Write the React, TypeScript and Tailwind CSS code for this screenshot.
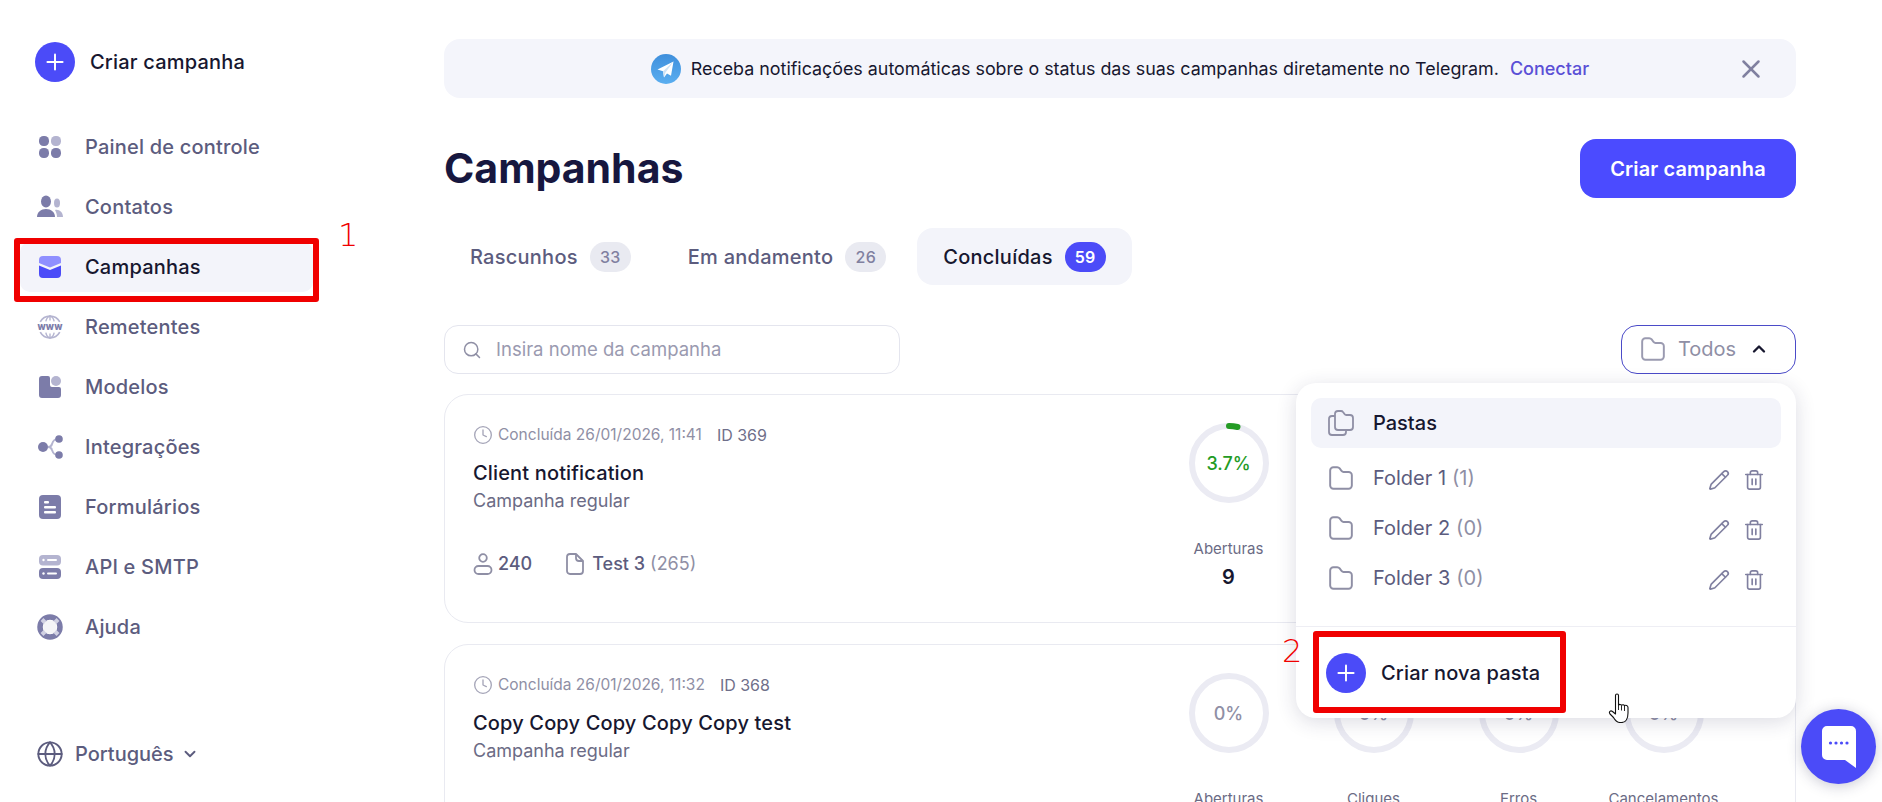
import { ChevronDown, ChevronUp, Clock, Globe, Pencil, Plus, Search, Trash2, X } from "lucide-react";
import { ReactNode } from "react";

const DARK = "#7c7ca9";
const LIGHT = "#b4b4d0";

function DashboardIcon() {
  return (
    <svg width="24" height="24" viewBox="0 0 24 24">
      <rect x="1" y="1" width="10" height="10" rx="4.5" fill={DARK} />
      <rect x="13" y="1" width="10" height="10" rx="4.5" fill={LIGHT} />
      <rect x="1" y="13" width="10" height="10" rx="4.5" fill={DARK} />
      <rect x="13" y="13" width="10" height="10" rx="4.5" fill={DARK} />
    </svg>
  );
}

function ContactsIcon() {
  return (
    <svg width="26" height="24" viewBox="0 0 26 24">
      <ellipse cx="9" cy="6.5" rx="5" ry="6" fill={DARK} />
      <path d="M0 22c0-5 4-8 9-8s9 3 9 8z" fill={DARK} />
      <ellipse cx="20" cy="8" rx="3" ry="4.5" fill={LIGHT} />
      <path d="M18 15c4-1 8 2 8 7h-6c0-3-1-5-2-7z" fill={LIGHT} />
    </svg>
  );
}

function MailIcon() {
  return (
    <svg width="24" height="24" viewBox="0 0 24 24">
      <path d="M1 5a4 4 0 0 1 4-4h14a4 4 0 0 1 4 4v3l-11 4.5L1 8z" fill="#8f8fff" />
      <path d="M1 10.5l11 4.5 11-4.5V19a4 4 0 0 1-4 4H5a4 4 0 0 1-4-4z" fill="#4b4bf8" />
    </svg>
  );
}

function WwwIcon() {
  return (
    <svg width="28" height="28" viewBox="0 0 28 28" fill="none">
      <path d="M3.500 8.500a12 12 0 0 1 21 0M3.500 19.500a12 12 0 0 0 21 0" stroke={LIGHT} strokeWidth="1.800" />
      <path d="M14 2v5M14 21v5M9.500 8c.6-3 2-5 4.500-6 2.500 1 3.900 3 4.500 6M9.500 20c.6 3 2 5 4.500 6 2.500-1 3.900-3 4.500-6" stroke={LIGHT} strokeWidth="1.500" />
      <text x="14" y="17.500" textAnchor="middle" textLength="27" lengthAdjust="spacingAndGlyphs" fontSize="10" fontWeight="800" fill={DARK}>
        www
      </text>
    </svg>
  );
}

function TemplateIcon() {
  return (
    <svg width="24" height="24" viewBox="0 0 24 24">
      <path d="M1 4a3 3 0 0 1 3-3h6a2 2 0 0 1 2 2v7a2 2 0 0 0 2 2h7a2 2 0 0 1 2 2v6a3 3 0 0 1-3 3H4a3 3 0 0 1-3-3z" fill={DARK} />
      <circle cx="18" cy="6" r="5" fill={LIGHT} />
    </svg>
  );
}

function IntegrationIcon() {
  return (
    <svg width="26" height="24" viewBox="0 0 26 24" fill="none">
      <path d="M21 4c-4 0-5 2-6 5-.5 2-1.500 3-4 3 2.500 0 3.500 1 4 3 1 3 2 5 6 5" stroke={LIGHT} strokeWidth="2" />
      <circle cx="6" cy="12" r="5" fill={DARK} />
      <circle cx="22" cy="4" r="3.800" fill={DARK} />
      <circle cx="22" cy="20" r="3.800" fill={DARK} />
    </svg>
  );
}

function FormIcon() {
  return (
    <svg width="24" height="24" viewBox="0 0 24 24">
      <rect x="1" y="0" width="22" height="24" rx="4" fill={DARK} />
      <rect x="6" y="6" width="5" height="2.400" rx="1" fill="#fff" />
      <rect x="6" y="11" width="12" height="2.400" rx="1" fill="#fff" />
      <rect x="6" y="16" width="12" height="2.400" rx="1" fill="#fff" />
    </svg>
  );
}

function ApiIcon() {
  return (
    <svg width="24" height="24" viewBox="0 0 24 24">
      <rect x="1" y="0" width="22" height="10.500" rx="4" fill={LIGHT} />
      <rect x="1" y="13" width="22" height="11" rx="4" fill={DARK} />
      <circle cx="5.500" cy="5" r="1.200" fill="#fff" />
      <rect x="9" y="4" width="10" height="2" rx="1" fill="#fff" />
      <circle cx="5.500" cy="18.500" r="1.200" fill="#fff" />
      <rect x="9" y="17.500" width="10" height="2" rx="1" fill="#fff" />
    </svg>
  );
}

function HelpIcon() {
  return (
    <svg width="26" height="26" viewBox="0 0 26 26" fill="none">
      <circle cx="13" cy="13" r="10" stroke={DARK} strokeWidth="5.500" />
      <path d="M5 5.500l4 4M21 5.500l-4 4M5 20.500l4-4M21 20.500l-4-4" stroke="#d0d0e2" strokeWidth="4" />
      <circle cx="13" cy="13" r="6.800" fill="#f4f4f7" />
    </svg>
  );
}

function FolderIcon({ className }: { className: string }) {
  return (
    <svg className={className} viewBox="0 0 24 24" fill="none" stroke="currentColor" strokeWidth="1.800" strokeLinejoin="round">
      <path d="M2 5a3 3 0 0 1 3-3h3.500c1 0 1.700.4 2.300 1.100L12.500 5.500c.5.600 1 .9 1.800.9H19a3 3 0 0 1 3 3V19a3 3 0 0 1-3 3H5a3 3 0 0 1-3-3z" />
    </svg>
  );
}

function FoldersIcon() {
  return (
    <svg className="h-[26px] w-[26px] text-[#8f8fa5]" viewBox="0 0 26 26" fill="none" stroke="currentColor" strokeWidth="1.800" strokeLinejoin="round">
      <path d="M7 4a3 3 0 0 1 3-3h3c1 0 1.500.3 2 1l1.500 2c.4.600 1 1 1.800 1H22a3 3 0 0 1 3 3v9a3 3 0 0 1-3 3H10a3 3 0 0 1-3-3z" />
      <path d="M7 6H4a3 3 0 0 0-3 3v13a3 3 0 0 0 3 3h11a3 3 0 0 0 3-3v-1" />
    </svg>
  );
}

function UserIcon() {
  return (
    <svg className="h-[22px] w-[20px] text-[#8f8fa5]" viewBox="0 0 20 22" fill="none" stroke="currentColor" strokeWidth="1.800">
      <circle cx="10" cy="5" r="3.800" />
      <rect x="1.500" y="13" width="17" height="8" rx="4" />
    </svg>
  );
}

function DocIcon() {
  return (
    <svg className="h-[22px] w-[20px] text-[#8f8fa5]" viewBox="0 0 20 22" fill="none" stroke="currentColor" strokeWidth="1.800" strokeLinejoin="round">
      <path d="M2 4a3 3 0 0 1 3-3h6l7 7v10a3 3 0 0 1-3 3H5a3 3 0 0 1-3-3z" />
      <path d="M11 1v4a3 3 0 0 0 3 3h4" />
    </svg>
  );
}

function TelegramIcon() {
  return (
    <svg width="30" height="30" viewBox="0 0 30 30">
      <defs>
        <linearGradient id="tg" x1="0" y1="0" x2="0" y2="1">
          <stop offset="0" stopColor="#3f8fdc" />
          <stop offset="1" stopColor="#5aaef0" />
        </linearGradient>
      </defs>
      <circle cx="15" cy="15" r="15" fill="url(#tg)" />
      <path d="M22.500 7.500 6.500 15.500l5.500 1.800 1 6.200 3-4 4 2.200z" fill="#fff" />
      <path d="M22.500 7.500 12 17.300l1 6.200 1.500-5z" fill="#cfe3f5" />
    </svg>
  );
}

function HandCursor() {
  return (
    <svg className="absolute top-[693px] left-[1608px] h-[30px] w-[25px]" viewBox="0 0 25 30" fill="#fff" stroke="#111" strokeWidth="1.100" strokeLinejoin="round">
      <path d="M7.500 2.500c0-2 3-2 3 0v9.500c.8-.8 2.400-.8 3 .2.900-.7 2.400-.6 3 .4 1-.6 3.500-.4 3.500 1.900v5.500c0 5-2 9.500-6.500 9.500h-1.500c-3.500 0-4.800-2-6.500-5L2 21c-1.500-2 .5-4 2.500-2.500l3 2.500z" />
      <path d="M13.500 12.500v5M16.500 13v5M10.500 12v5" fill="none" strokeWidth="0.900" />
    </svg>
  );
}

function Ring({ label, value, percent, count }: { label: string; value: string; percent: number; count: string }) {
  return (
    <div className="flex w-[145px] flex-col items-center">
      <div className="relative h-[80px] w-[80px]">
        <svg className="h-[80px] w-[80px] -rotate-90" viewBox="0 0 80 80" fill="none">
          <circle cx="40" cy="40" r="37" stroke="#ebebf3" strokeWidth="6" />
          {percent > 0 && (
            <circle cx="40" cy="40" r="37" stroke="#249b24" strokeWidth="6" strokeLinecap="round" strokeDasharray={`${(percent / 100) * 232} 232`} />
          )}
        </svg>
        <span className={`absolute inset-0 flex items-center justify-center pt-[2px] text-lg font-medium ${percent > 0 ? "text-[#249b24]" : "text-[#8f8fa5]"}`}>
          {value}
        </span>
      </div>
      <span className="mt-[36px] text-[15px] leading-5 text-[#6b6b85]">{label}</span>
      <span className="mt-[6px] text-xl font-semibold leading-6 text-[#17172f]">{count}</span>
    </div>
  );
}

function CampaignCard({ time, id, title, recipients, template, rate, opens }: { time: string; id: string; title: string; recipients: string; template: string; rate: string; opens: string }) {
  const percent = parseFloat(rate);
  return (
    <div className="flex h-[229px] shrink-0 justify-between rounded-[24px] border border-[#e9eaf1] pr-[59px] pl-[28px]">
      <div className="pt-[30px]">
        <div className="flex h-5 items-center text-[15.500px] text-[#8f8fa5]">
          <Clock className="mr-[5px] h-5 w-5 text-[#a5a5b8]" strokeWidth={1.6} />
          <span>Concluída {time}</span>
          <span className="ml-[15px] text-base text-[#6f6f8a]">ID {id}</span>
        </div>
        <div className="mt-[15px] text-xl leading-[26px] font-medium tracking-[0.15px] text-[#17172f]">{title}</div>
        <div className="mt-[4px] text-lg leading-[22px] text-[#6b6b85]">Campanha regular</div>
        <div className="mt-[40px] flex h-6 items-center text-lg text-[#5c5c7e]">
          <UserIcon />
          <span className="ml-[5px] font-medium">{recipients}</span>
          <span className="mr-[7px] ml-[33px]">
            <DocIcon />
          </span>
          <span className="font-medium">{template}</span>
          <span className="ml-[5px] text-[#8f8fa5]">(265)</span>
        </div>
      </div>
      <div className="flex pt-[28px]">
        <Ring label="Aberturas" value={rate} percent={percent} count={opens} />
        <Ring label="Cliques" value="0%" percent={0} count="0" />
        <Ring label="Erros" value="0%" percent={0} count="0" />
        <Ring label="Cancelamentos" value="0%" percent={0} count="0" />
      </div>
    </div>
  );
}

function FolderRow({ name, count }: { name: string; count: string }) {
  return (
    <div className="flex h-[50px] items-center pr-[16px] pl-[17px]">
      <FolderIcon className="h-[26px] w-[26px] text-[#8f8fa5]" />
      <span className="ml-[19px] text-xl text-[#5c5c7e]">{name}</span>
      <span className="ml-[6px] text-xl text-[#8f8fa5]">({count})</span>
      <div className="mt-[4px] ml-auto flex items-center gap-[13px] text-[#8080a0]">
        <Pencil className="h-[22px] w-[22px]" strokeWidth={1.8} />
        <Trash2 className="h-[22px] w-[22px]" strokeWidth={1.8} />
      </div>
    </div>
  );
}

function NavItem({ icon, label, active }: { icon: ReactNode; label: string; active?: boolean }) {
  return (
    <div className={`flex h-[50px] items-center rounded-[10px] pl-[17px] text-xl font-medium tracking-[0.2px] ${active ? "bg-[#f3f4fa] text-[#17172f]" : "text-[#5c5c7e]"}`}>
      <span className="flex w-[26px] justify-center">{icon}</span>
      <span className="ml-[22px]">{label}</span>
    </div>
  );
}

export default function App() {
  return (
    <div className="relative flex h-[802px] w-[1882px] overflow-hidden bg-white [font-family:Inter,sans-serif]">
      <aside className="flex h-full w-[444px] shrink-0 flex-col pt-[42px]">
        <div className="flex items-center pl-[35px]">
          <span className="flex h-[40px] w-[40px] items-center justify-center rounded-full bg-[#4b4bf8] text-white">
            <Plus className="h-[26px] w-[26px]" strokeWidth={1.8} />
          </span>
          <span className="ml-[15px] text-xl font-medium tracking-[0.2px] text-[#17172f]">Criar campanha</span>
        </div>
        <nav className="mt-[40px] flex w-[293px] translate-x-[20px] flex-col gap-[10px]">
          <NavItem icon={<DashboardIcon />} label="Painel de controle" />
          <NavItem icon={<ContactsIcon />} label="Contatos" />
          <NavItem icon={<MailIcon />} label="Campanhas" active />
          <NavItem icon={<WwwIcon />} label="Remetentes" />
          <NavItem icon={<TemplateIcon />} label="Modelos" />
          <NavItem icon={<IntegrationIcon />} label="Integrações" />
          <NavItem icon={<FormIcon />} label="Formulários" />
          <NavItem icon={<ApiIcon />} label="API e SMTP" />
          <NavItem icon={<HelpIcon />} label="Ajuda" />
        </nav>
        <div className="mt-auto flex items-center pb-[34px] pl-[36px] text-[#5c5c7e]">
          <Globe className="h-[28px] w-[28px]" strokeWidth={1.600} />
          <span className="ml-[11px] text-xl font-medium">Português</span>
          <ChevronDown className="ml-[7px] h-[18px] w-[18px]" strokeWidth={2.500} />
        </div>
      </aside>

      <main className="flex h-full w-[1352px] shrink-0 flex-col pt-[39px]">
        <div className="relative flex h-[59px] shrink-0 items-center justify-center rounded-[16px] bg-[#f4f5fb] text-lg">
          <TelegramIcon />
          <span className="ml-[10px] text-[17.870px] text-[#17172f]">Receba notificações automáticas sobre o status das suas campanhas diretamente no Telegram.</span>
          <span className="ml-[11px] font-medium text-[#5a4fd6]">Conectar</span>
          <X className="absolute top-[15px] right-[30px] h-[30px] w-[30px] text-[#8080a0]" strokeWidth={2} />
        </div>

        <div className="mt-[41px] flex h-[59px] shrink-0 items-center justify-between">
          <h1 className="text-[41px] font-bold text-[#17173f]">Campanhas</h1>
          <button className="h-[59px] w-[216px] rounded-[16px] bg-[#4b4bff] text-xl font-semibold tracking-[0.1px] text-white">Criar campanha</button>
        </div>

        <div className="mt-[30px] flex h-[57px] shrink-0 items-center gap-[5px] text-xl font-medium tracking-[0.25px]">
          <div className="flex h-full items-center gap-[12px] rounded-[16px] px-[26px] text-[#5c5c7e]">
            Rascunhos
            <span className="flex h-[30px] w-[41px] items-center justify-center rounded-full bg-[#e9eaf1] text-base text-[#8080a0]">33</span>
          </div>
          <div className="flex h-full items-center gap-[12px] rounded-[16px] px-[26px] text-[#5c5c7e]">
            Em andamento
            <span className="flex h-[30px] w-[41px] items-center justify-center rounded-full bg-[#e9eaf1] text-base text-[#8080a0]">26</span>
          </div>
          <div className="flex h-full items-center gap-[12px] rounded-[16px] bg-[#f3f4fa] px-[26px] text-[#17172f]">
            Concluídas
            <span className="flex h-[30px] w-[41px] items-center justify-center rounded-full bg-[#4b4bf8] text-base font-semibold text-white">59</span>
          </div>
        </div>

        <div className="mt-[40px] flex h-[49px] shrink-0 items-center justify-between">
          <div className="flex h-[49px] w-[456px] items-center rounded-[14px] border border-[#e4e5ee] pl-[17px]">
            <Search className="h-[20px] w-[20px] text-[#8f8fa5]" strokeWidth={1.800} />
            <span className="ml-[14px] text-[18.500px] text-[#9a9ab0]">Insira nome da campanha</span>
          </div>
          <div className="flex h-[49px] w-[175px] items-center rounded-[16px] border border-[#4b4bc8] pb-[1px] pl-[18px]">
            <FolderIcon className="h-[26px] w-[26px] text-[#9a9ab0]" />
            <span className="ml-[12px] text-xl text-[#8f8fa5]">Todos</span>
            <ChevronUp className="ml-[13px] h-[20px] w-[20px] text-[#17172f]" strokeWidth={2.800} />
          </div>
        </div>

        <div className="mt-[20px] flex flex-col gap-[21px]">
          <CampaignCard time="26/01/2026, 11:41" id="369" title="Client notification" recipients="240" template="Test 3" rate="3.7%" opens="9" />
          <CampaignCard time="26/01/2026, 11:32" id="368" title="Copy Copy Copy Copy Copy test" recipients="240" template="Test 3" rate="0%" opens="0" />
        </div>
      </main>

      {/* open folder menu */}
      <div className="absolute top-[383px] left-[1296px] w-[500px] rounded-[20px] bg-white pt-[15px] shadow-[0_4px_20px_rgba(40,40,80,0.16)]">
        <div className="mx-[15px] flex h-[50px] items-center rounded-[10px] bg-[#f3f4fa] pl-[17px]">
          <FoldersIcon />
          <span className="ml-[19px] text-xl font-medium text-[#17172f]">Pastas</span>
        </div>
        <div className="mx-[15px] mt-[5px]">
          <FolderRow name="Folder 1" count="1" />
          <FolderRow name="Folder 2" count="0" />
          <FolderRow name="Folder 3" count="0" />
        </div>
        <div className="mt-[23px] flex h-[92px] items-center border-t border-[#eeeef4] pt-[1px] pl-[30px]">
          <span className="flex h-[40px] w-[40px] items-center justify-center rounded-full bg-[#4b4bf8] text-white">
            <Plus className="h-[26px] w-[26px]" strokeWidth={1.800} />
          </span>
          <span className="ml-[15px] text-xl font-medium tracking-[0.15px] text-[#17172f]">Criar nova pasta</span>
        </div>
      </div>

      <HandCursor />

      {/* chat launcher */}
      <div className="absolute top-[709px] left-[1801px] flex h-[75px] w-[75px] items-center justify-center rounded-full bg-[#4b4bf8] shadow-[0_2px_14px_rgba(40,40,80,0.25)]">
        <svg width="36" height="44" viewBox="0 0 36 44">
          <path d="M6 1h24a5 5 0 0 1 5 5v37l-11-8H6a5 5 0 0 1-5-5V6a5 5 0 0 1 5-5z" fill="#fff" />
          <circle cx="9.500" cy="18" r="1.600" fill="#4b4bf8" />
          <circle cx="15" cy="18" r="1.600" fill="#4b4bf8" />
          <circle cx="20.500" cy="18" r="1.600" fill="#4b4bf8" />
          <circle cx="26" cy="18" r="1.600" fill="#4b4bf8" />
        </svg>
      </div>

      {/* red annotations */}
      <div className="absolute top-[238px] left-[14px] h-[64px] w-[305px] rounded-[3px] border-[6px] border-[#f00000]" />
      <span className="absolute top-[215px] left-[338px] text-[32px] leading-[40px] font-light text-[#f00000] [font-family:'DejaVu_Sans',sans-serif]">1</span>
      <div className="absolute top-[631px] left-[1313px] h-[82px] w-[253px] rounded-[3px] border-[6px] border-[#f00000]" />
      <span className="absolute top-[631px] left-[1282px] text-[32px] leading-[40px] font-light text-[#f00000] [font-family:'DejaVu_Sans',sans-serif]">2</span>
    </div>
  );
}
